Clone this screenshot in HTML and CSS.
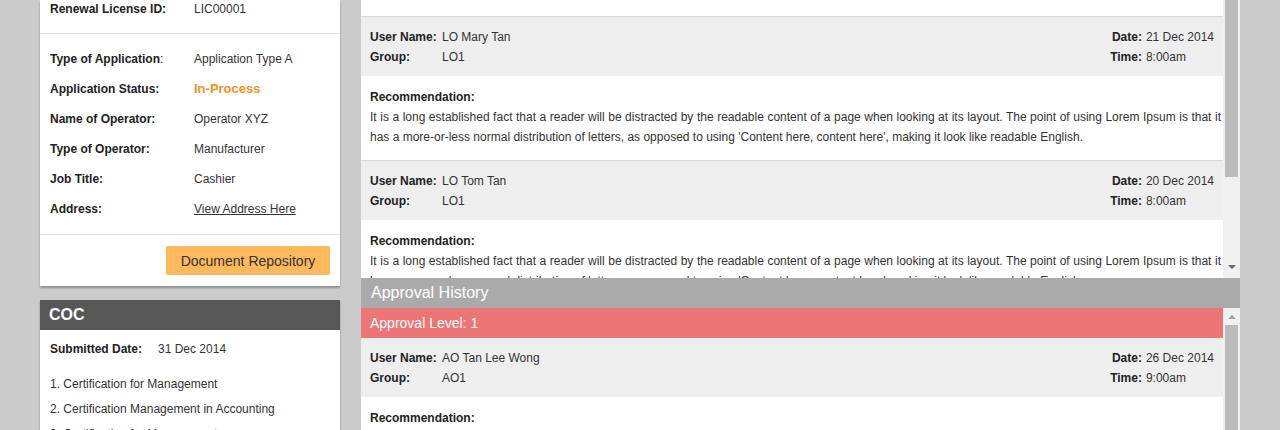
FILE: index.html
```html
<!DOCTYPE html>
<html>
<head>
<meta charset="utf-8">
<link rel="stylesheet" href="styles.css">
</head>
<body>
<div class="page">
  <div class="side">
    <div class="card info">
      <div class="sec sec-top">
        <div class="kv"><span class="k">Renewal License ID:</span><span class="v">LIC00001</span></div>
      </div>
      <div class="sec sec-list">
        <div class="kv"><span class="k">Type of Application<span class="colon">:</span></span><span class="v">Application Type A</span></div>
        <div class="kv"><span class="k">Application Status:</span><span class="v status">In-Process</span></div>
        <div class="kv"><span class="k">Name of Operator:</span><span class="v">Operator XYZ</span></div>
        <div class="kv"><span class="k">Type of Operator:</span><span class="v">Manufacturer</span></div>
        <div class="kv"><span class="k">Job Title:</span><span class="v">Cashier</span></div>
        <div class="kv"><span class="k">Address:</span><span class="v"><a class="link" href="#">View Address Here</a></span></div>
      </div>
      <div class="sec sec-actions">
        <button class="btn">Document Repository</button>
      </div>
    </div>
    <div class="card coc">
      <div class="card-head">COC</div>
      <div class="coc-body">
        <div class="kv coc-kv"><span class="k">Submitted Date:</span><span class="v">31 Dec 2014</span></div>
        <ol class="coc-list">
          <li>1. Certification for Management</li>
          <li>2. Certification Management in Accounting</li>
          <li>3. Certification for Management</li>
        </ol>
      </div>
    </div>
  </div>

  <div class="main">
    <div class="scroller upper">
      <div class="scroll-content">
        <div class="tail"></div>
        <div class="entry">
          <div class="meta">
            <div class="pairs">
              <span class="k">User Name:</span><span class="v">LO Mary Tan</span>
              <span class="k">Group:</span><span class="v">LO1</span>
            </div>
            <div class="pairs right">
              <span class="k">Date:</span><span class="v">21 Dec 2014</span>
              <span class="k">Time:</span><span class="v">8:00am</span>
            </div>
          </div>
          <div class="rec">
            <div class="k">Recommendation:</div>
            <p class="rec-text">It is a long established fact that a reader will be distracted by the readable content of a page when looking at its layout. The point of using Lorem Ipsum is that it has a more-or-less normal distribution of letters, as opposed to using 'Content here, content here', making it look like readable English.</p>
          </div>
        </div>
        <div class="entry">
          <div class="meta">
            <div class="pairs">
              <span class="k">User Name:</span><span class="v">LO Tom Tan</span>
              <span class="k">Group:</span><span class="v">LO1</span>
            </div>
            <div class="pairs right">
              <span class="k">Date:</span><span class="v">20 Dec 2014</span>
              <span class="k">Time:</span><span class="v">8:00am</span>
            </div>
          </div>
          <div class="rec">
            <div class="k">Recommendation:</div>
            <p class="rec-text">It is a long established fact that a reader will be distracted by the readable content of a page when looking at its layout. The point of using Lorem Ipsum is that it has a more-or-less normal distribution of letters, as opposed to using 'Content here, content here', making it look like readable English.</p>
          </div>
        </div>
      </div>
      <div class="sbar">
        <div class="thumb thumb-upper"></div>
        <div class="sbar-fill"></div>
        <div class="sbtn sbtn-down"><span class="arrow-down"></span></div>
      </div>
    </div>

    <div class="history-head">Approval History</div>

    <div class="scroller lower">
      <div class="scroll-content">
        <div class="level">Approval Level: 1</div>
        <div class="entry">
          <div class="meta">
            <div class="pairs">
              <span class="k">User Name:</span><span class="v">AO Tan Lee Wong</span>
              <span class="k">Group:</span><span class="v">AO1</span>
            </div>
            <div class="pairs right">
              <span class="k">Date:</span><span class="v">26 Dec 2014</span>
              <span class="k">Time:</span><span class="v">9:00am</span>
            </div>
          </div>
          <div class="rec">
            <div class="k">Recommendation:</div>
            <p class="rec-text">It is a long established fact that a reader will be distracted by the readable content of a page when looking at its layout.</p>
          </div>
        </div>
      </div>
      <div class="sbar">
        <div class="sbtn sbtn-up"><span class="arrow-up"></span></div>
        <div class="thumb thumb-lower"></div>
      </div>
    </div>
  </div>
</div>
</body>
</html>
```

FILE: styles.css
```css
html, body {
  margin: 0;
  padding: 0;
}
body {
  background: #cbcbcb;
  font-family: "Liberation Sans", Arial, sans-serif;
  font-size: 12px;
  color: #333;
  height: 430px;
  overflow: hidden;
}
.page {
  display: flex;
  align-items: flex-start;
  padding-left: 40px;
  gap: 21px;
}
.side {
  width: 300px;
  display: flex;
  flex-direction: column;
  gap: 14px;
  flex: none;
}
.card {
  background: #fff;
  box-shadow: 0 2px 2px rgba(0, 0, 0, 0.3);
}
.k {
  font-weight: bold;
  color: #222;
}
.colon {
  font-weight: normal;
}
.v {
  color: #333;
}
.kv {
  display: grid;
  grid-template-columns: 144px 1fr;
  line-height: 30px;
}
.sec-top {
  padding: 0 10px;
  border-bottom: 1px solid #e6e6e6;
  box-sizing: border-box;
  height: 34px;
}
.sec-top .kv {
  line-height: 18px;
}
.sec-list {
  padding: 10px 10px;
  border-bottom: 1px solid #e6e6e6;
}
.status {
  color: #f7941d;
  font-weight: bold;
  font-size: 13px;
}
.link {
  color: #333;
  text-decoration: underline;
}
.sec-actions {
  display: flex;
  justify-content: flex-end;
  padding: 11px 10px 11px;
}
.btn {
  width: 164px;
  height: 29px;
  border: 0;
  border-radius: 2px;
  background: #fdb95b;
  color: #333;
  font-family: "Liberation Sans", Arial, sans-serif;
  font-size: 14px;
  padding: 0;
}
.card-head {
  height: 30px;
  line-height: 30px;
  background: #575757;
  color: #fff;
  font-weight: bold;
  font-size: 16px;
  padding-left: 9px;
}
.coc-body {
  padding: 9px 10px 10px;
}
.coc-kv {
  grid-template-columns: 108px 1fr;
  line-height: 20px;
}
.coc-list {
  list-style: none;
  margin: 13px 0 0;
  padding: 0;
  line-height: 25px;
}

.main {
  width: 879px;
  flex: none;
  display: flex;
  flex-direction: column;
}
.scroller {
  display: flex;
}
.upper {
  height: 278px;
}
.lower {
  height: 130px;
}
.scroll-content {
  flex: 1;
  min-width: 0;
  overflow: hidden;
  background: #fff;
}
.tail {
  height: 16px;
  border-bottom: 1px solid #d9d9d9;
}
.meta {
  background: #eeeeee;
  padding: 10px 9px 9px;
  display: flex;
  justify-content: space-between;
  line-height: 20px;
}
.pairs {
  display: grid;
  grid-template-columns: 72px auto;
}
.pairs.right {
  grid-template-columns: auto auto;
  column-gap: 4px;
}
.pairs.right .k {
  text-align: right;
}
.rec {
  padding: 11px 2px 13px 9px;
  line-height: 20px;
  border-bottom: 1px solid #d9d9d9;
}
.rec-text {
  margin: 0;
  text-align: justify;
}
.history-head {
  height: 30px;
  line-height: 30px;
  background: #aaaaaa;
  color: #fff;
  font-size: 16px;
  padding-left: 10px;
}
.level {
  height: 30px;
  line-height: 30px;
  background: #ec7575;
  color: #fff;
  font-size: 14px;
  padding-left: 9px;
}
.sbar {
  width: 17px;
  flex: none;
  background: #f1f1f1;
  display: flex;
  flex-direction: column;
}
.thumb {
  margin: 0 2px 0 2px;
  background: #bcbcbc;
}
.thumb-upper {
  height: 177px;
}
.thumb-lower {
  flex: 1;
}
.sbar-fill {
  flex: 1;
}
.sbtn {
  height: 17px;
  display: flex;
  align-items: center;
  justify-content: center;
  flex: none;
}
.sbtn-down {
  align-items: flex-start;
  padding-top: 4px;
  box-sizing: border-box;
}
.arrow-down {
  width: 0;
  height: 0;
  border-left: 4px solid transparent;
  border-right: 4px solid transparent;
  border-top: 4px solid #666;
}
.arrow-up {
  width: 0;
  height: 0;
  border-left: 4px solid transparent;
  border-right: 4px solid transparent;
  border-bottom: 4px solid #a3a3a3;
}
```
